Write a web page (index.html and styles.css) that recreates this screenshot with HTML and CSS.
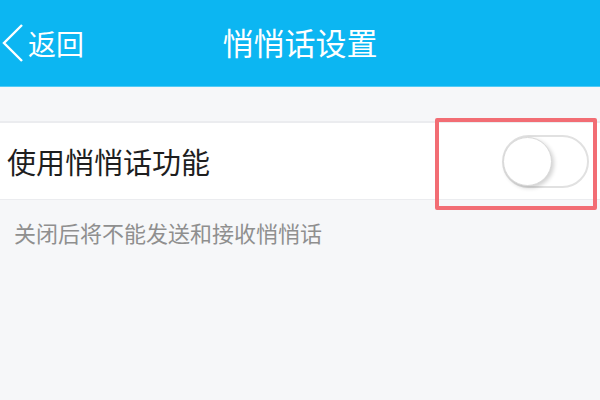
FILE: index.html
```html
<!DOCTYPE html>
<html lang="zh-CN">
<head>
    <meta charset="UTF-8">
    <meta name="viewport" content="width=device-width, initial-scale=1.0">
    <title>悄悄话设置</title>
    <link rel="stylesheet" href="styles.css">
</head>
<body>

    <header class="top-bar">
        <a class="back" href="#">
            <svg class="back-icon" width="22" height="40" viewBox="0 0 22 40">
                <polyline points="20,2 2,20 20,38" fill="none" stroke="#ffffff" stroke-width="2.4" stroke-linejoin="miter" />
            </svg>
            <span>返回</span>
        </a>
        <h1 class="title">悄悄话设置</h1>
    </header>

    <div class="setting-row">
        <span class="setting-label">使用悄悄话功能</span>
        <div class="switch"><div class="knob"></div></div>
        <div class="highlight"></div>
    </div>

    <p class="hint">关闭后将不能发送和接收悄悄话</p>

</body>
</html>
```

FILE: styles.css
```css
/* Basic Reset */
* {
    margin: 0;
    padding: 0;
    box-sizing: border-box;
}

body {
    font-family: "Noto Sans CJK SC", "Noto Sans", sans-serif;
    background-color: #f6f7f9;
    color: #222222;
    width: 600px;
    height: 400px;
    overflow: hidden;
}

/* Header */
.top-bar {
    height: 87px;
    background-color: #0cb6f2;
    border-bottom: 1px solid #53cbf6;
    display: flex;
    align-items: center;
    justify-content: center;
    position: relative;
}

.back {
    position: absolute;
    left: 2px;
    top: 23px;
    display: flex;
    align-items: center;
    color: #ffffff;
    text-decoration: none;
    font-size: 28px;
    line-height: 40px;
}

.back-icon {
    margin-right: 4px;
}

.title {
    color: #ffffff;
    font-size: 31px;
    font-weight: normal;
    margin-top: -4px;
}

/* Setting row */
.setting-row {
    margin-top: 34px;
    height: 79px;
    background-color: #ffffff;
    border-top: 2px solid #ebecef;
    border-bottom: 1px solid #ebecef;
    display: flex;
    align-items: center;
    justify-content: space-between;
    padding: 0 11px 0 7px;
    position: relative;
}

.setting-label {
    font-size: 29px;
    color: #1e1e1e;
}

.switch {
    width: 87px;
    height: 53px;
    border-radius: 27px;
    border: 2px solid #e1e1e1;
    background-color: #ffffff;
    position: relative;
}

.knob {
    position: absolute;
    left: -1px;
    top: 0;
    width: 49px;
    height: 49px;
    border-radius: 50%;
    background-color: #ffffff;
    border: 1px solid #d8d8d8;
    box-shadow: 2px 2px 4px rgba(0, 0, 0, 0.18);
}

/* Red annotation box around the switch */
.highlight {
    position: absolute;
    left: 435px;
    top: -5px;
    width: 162px;
    height: 92px;
    border: 4px solid #f26d74;
    border-radius: 2px;
}

.hint {
    font-size: 22px;
    color: #8f8f8f;
    padding: 16px 0 0 14px;
}
```
